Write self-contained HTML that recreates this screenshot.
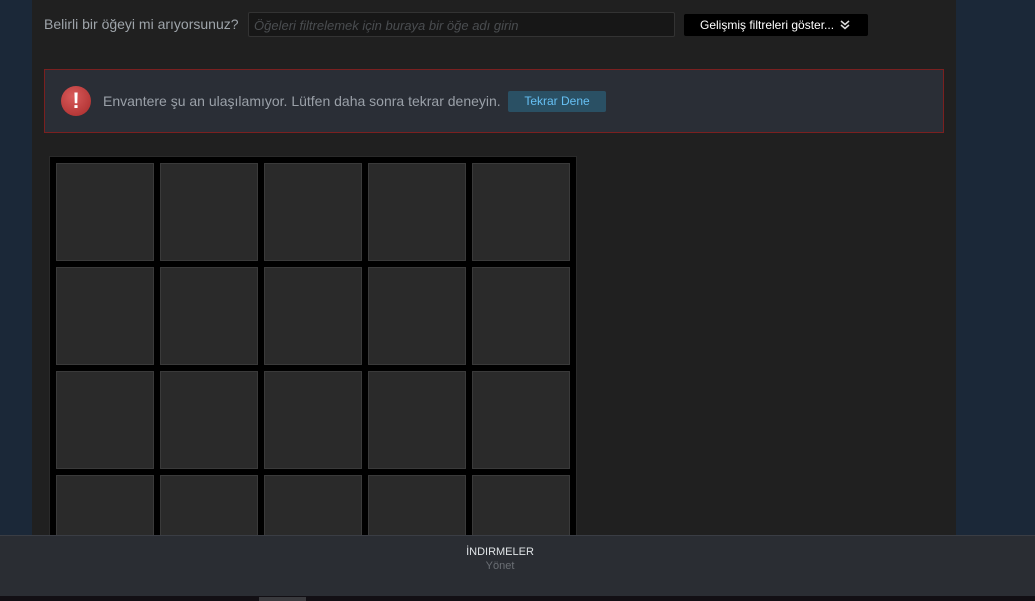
<!DOCTYPE html>
<html><head><meta charset="utf-8"><style>
*{margin:0;padding:0;box-sizing:border-box}
body{width:1035px;height:601px;overflow:hidden;background:#1b2838;font-family:"Liberation Sans",sans-serif;position:relative}
.panel{position:absolute;left:32px;top:0;width:924px;height:601px;background:#202020}
.abs{position:absolute}
.lbl{left:44px;top:16px;font-size:14px;color:#9ea4aa}
.inp{left:248px;top:12px;width:427px;height:25px;background:#171717;border:1px solid #333;border-radius:2px;font-size:13px;font-style:italic;color:#4a4d50;padding:5px 5px;white-space:nowrap}
.fbtn{left:684px;top:14px;width:184px;height:22px;background:#000;color:#fff;font-size:12px;padding:4px 0 0 16px;border-radius:2px}
.err{left:44px;top:69px;width:900px;height:64px;background:#2a2e36;border:1px solid #7a2020}
.icon{left:61px;top:86px;width:30px;height:30px;border-radius:50%;background:radial-gradient(circle at 40% 35%,#d85a5a,#a82a2a);color:#fff;font-weight:bold;font-size:22px;text-align:center;line-height:30px}
.etxt{left:103px;top:93px;font-size:14px;color:#9aa0a8}
.tbtn{left:508px;top:91px;width:98px;height:21px;background:#2a5064;color:#66c0f4;font-size:12px;text-align:center;line-height:21px;border-radius:2px}
.grid{left:49px;top:156px;width:528px;height:400px;background:#000;border:1px solid #2a2a2a}
.cell{position:absolute;width:98px;height:98px;background:#2a2a2a;border:1px solid #3a3a3a}
.foot{left:0;top:535px;width:1035px;height:61px;background:#2a2d33;border-top:1px solid #3a3d44}
.strip{left:0;top:596px;width:1035px;height:5px;background:#120f14}
</style></head><body>
<div class="panel"></div>
<div class="abs lbl">Belirli bir öğeyi mi arıyorsunuz?</div>
<div class="abs inp">Öğeleri filtrelemek için buraya bir öğe adı girin</div>
<div class="abs fbtn">Gelişmiş filtreleri göster...<svg style="position:absolute;left:156px;top:6px" width="10" height="10" viewBox="0 0 10 10"><path d="M1 1 L5 4.5 L9 1 M1 5 L5 8.5 L9 5" stroke="#ddd" stroke-width="1.5" fill="none"/></svg></div>
<div class="abs err"></div>
<div class="abs icon">!</div>
<div class="abs etxt">Envantere şu an ulaşılamıyor. Lütfen daha sonra tekrar deneyin.</div>
<div class="abs tbtn">Tekrar Dene</div>
<div class="abs grid">
<div class="cell" style="left:6px;top:6px"></div><div class="cell" style="left:110px;top:6px"></div><div class="cell" style="left:214px;top:6px"></div><div class="cell" style="left:318px;top:6px"></div><div class="cell" style="left:422px;top:6px"></div>
<div class="cell" style="left:6px;top:110px"></div><div class="cell" style="left:110px;top:110px"></div><div class="cell" style="left:214px;top:110px"></div><div class="cell" style="left:318px;top:110px"></div><div class="cell" style="left:422px;top:110px"></div>
<div class="cell" style="left:6px;top:214px"></div><div class="cell" style="left:110px;top:214px"></div><div class="cell" style="left:214px;top:214px"></div><div class="cell" style="left:318px;top:214px"></div><div class="cell" style="left:422px;top:214px"></div>
<div class="cell" style="left:6px;top:318px"></div><div class="cell" style="left:110px;top:318px"></div><div class="cell" style="left:214px;top:318px"></div><div class="cell" style="left:318px;top:318px"></div><div class="cell" style="left:422px;top:318px"></div>
</div>
<div class="abs foot"><div style="position:absolute;left:400px;width:200px;text-align:center;top:10px;font-size:11px;color:#dfe3e6">İNDIRMELER</div><div style="position:absolute;left:400px;width:200px;text-align:center;top:24px;font-size:11px;color:#6b6f75">Yönet</div></div>
<div class="abs strip"><div class="abs" style="left:259px;top:1px;width:47px;height:4px;background:#3a3a3e"></div></div>
</body></html>
